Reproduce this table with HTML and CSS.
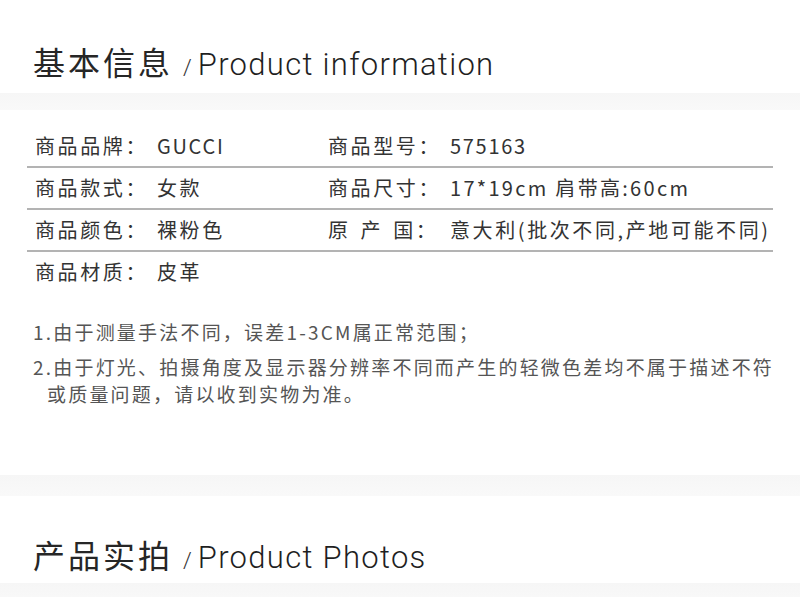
FILE: index.html
```html
<!DOCTYPE html>
<html lang="zh-CN">
<head>
<meta charset="utf-8">
<title>基本信息 / Product information</title>
<link rel="stylesheet" href="styles.css">
</head>
<body>
<div class="page">
  <h2 class="sec-title sec-title-first"><span class="cn">基本信息</span><span class="slash">/</span><span class="en">Product information</span></h2>
  <div class="band"></div>

  <div class="spec">
    <div class="row">
      <span class="lbl">商品品牌：</span><span class="val val-latin">GUCCI</span>
      <span class="lbl">商品型号：</span><span class="val val-latin">575163</span>
    </div>
    <div class="row">
      <span class="lbl">商品款式：</span><span class="val">女款</span>
      <span class="lbl">商品尺寸：</span><span class="val val-mixed">17*19cm 肩带高:60cm</span>
    </div>
    <div class="row">
      <span class="lbl">商品颜色：</span><span class="val">裸粉色</span>
      <span class="lbl">原<span class="sp"></span>产<span class="sp"></span>国：</span><span class="val">意大利(批次不同,产地可能不同)</span>
    </div>
    <div class="row row-last">
      <span class="lbl">商品材质：</span><span class="val">皮革</span>
    </div>
  </div>

  <div class="notes">
    <p class="note">1.由于测量手法不同，误差1-3CM属正常范围；</p>
    <p class="note">2.由于灯光、拍摄角度及显示器分辨率不同而产生的轻微色差均不属于描述不符<br>或质量问题，请以收到实物为准。</p>
  </div>

  <div class="band band-mid"></div>

  <h2 class="sec-title sec-title-second"><span class="cn">产品实拍</span><span class="slash">/</span><span class="en">Product Photos</span></h2>
  <div class="band band-bottom"></div>
</div>
</body>
</html>
```

FILE: styles.css
```css
html, body {
  margin: 0;
  padding: 0;
  background: #ffffff;
}

.page {
  display: flex;
  flex-direction: column;
  width: 800px;
  overflow: hidden;
  font-family: "Noto Sans CJK SC", "Noto Sans", sans-serif;
  color: #333333;
}

.sec-title {
  margin: 0;
  padding-left: 33px;
  display: flex;
  align-items: baseline;
  height: 40px;
  line-height: 40px;
  font-weight: 400;
  color: #262626;
  white-space: nowrap;
}

.sec-title-first {
  margin-top: 41px;
}

.sec-title-second {
  margin-top: 38px;
}

.sec-title .cn {
  font-family: "Noto Sans CJK SC", sans-serif;
  font-size: 32px;
  letter-spacing: 3px;
  font-weight: 400;
}

.sec-title .slash {
  font-family: "Roboto", sans-serif;
  font-weight: 300;
  font-size: 22px;
  margin-left: 10px;
  margin-right: 6px;
  color: #333;
}

.sec-title .en {
  font-family: "Roboto", sans-serif;
  font-size: 31px;
  font-weight: 300;
  letter-spacing: 1.3px;
  color: #1f1f1f;
}

.band {
  height: 17px;
  margin-top: 12px;
  background: linear-gradient(#f6f6f6, #f9f9f9);
}

.band-mid {
  height: 21px;
  margin-top: 68px;
}

.band-bottom {
  margin-top: 9px;
  height: 20px;
}

.spec {
  margin: 16px 27px 0 27px;
  display: flex;
  flex-direction: column;
}

.row {
  display: grid;
  grid-template-columns: 122px 171px 122px 1fr;
  align-items: center;
  height: 40px;
  padding-left: 8px;
  border-bottom: 2px solid #b3b3b3;
  font-size: 20px;
  letter-spacing: 2.6px;
  white-space: nowrap;
}

.row-last {
  border-bottom: 0;
}

.lbl, .val {
  line-height: 40px;
}

.val-latin {
  letter-spacing: 1.7px;
}

.val-mixed {
  letter-spacing: 2.3px;
}

.sp {
  display: inline-block;
  width: 10px;
}

.notes {
  margin-top: 26px;
  padding-left: 33px;
  display: flex;
  flex-direction: column;
  gap: 8px;
  color: #555555;
}

.note {
  margin: 0;
  font-size: 19px;
  line-height: 27px;
  letter-spacing: 2.2px;
  white-space: nowrap;
  padding-left: 14px;
  text-indent: -14px;
}
```
